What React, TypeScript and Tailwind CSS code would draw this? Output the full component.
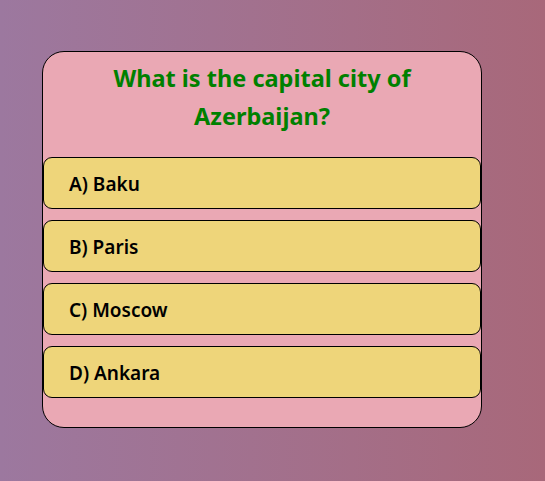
import React from "react";

const options = ["A) Baku", "B) Paris", "C) Moscow", "D) Ankara"];

const App = () => {
  return (
    <div
      className="min-h-[481px] w-full bg-gradient-to-r from-[#9c789f] to-[#a8687a] pt-[51px] pl-[42px]"
      style={{ fontFamily: '"Noto Sans", "Open Sans", sans-serif' }}
    >
      {/* quiz card */}
      <div className="w-[440px] h-[377px] rounded-[22px] border border-black bg-[#eaa8b4] overflow-hidden">
        {/* question */}
        <h2 className="px-[30px] pt-[7px] text-center text-[23.5px] font-bold leading-[38px] text-[#008000]">
          What is the capital city of Azerbaijan?
        </h2>

        {/* answers */}
        <div className="mt-[22px] flex flex-col gap-[11px]">
          {options.map((opt) => (
            <button
              key={opt}
              className="h-[52px] w-full rounded-[9px] border border-black bg-[#eed57a] pl-[25px] pt-[2px] text-left text-[19px] font-semibold text-black"
            >
              {opt}
            </button>
          ))}
        </div>
      </div>
    </div>
  );
};

export default App;
